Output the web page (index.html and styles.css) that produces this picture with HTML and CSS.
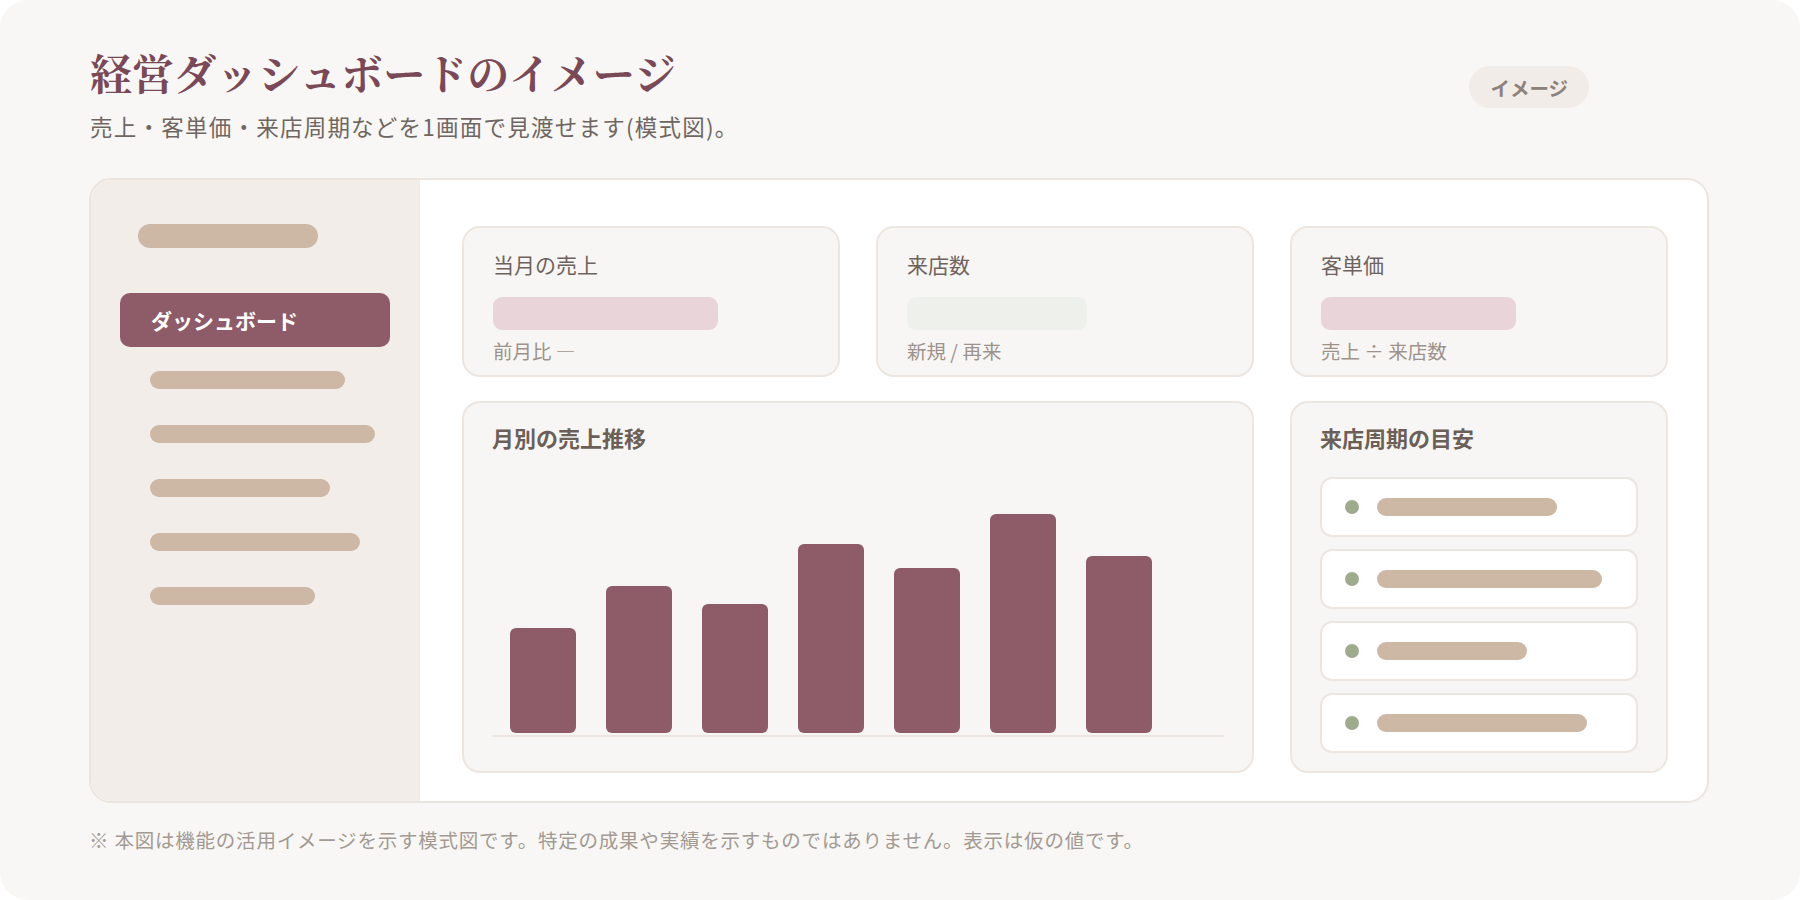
FILE: index.html
```html
<!DOCTYPE html>
<html lang="ja">
<head>
<meta charset="utf-8">
<title>経営ダッシュボードのイメージ</title>
<link rel="stylesheet" href="styles.css">
</head>
<body>
<div class="page">
  <header class="page-header">
    <div class="heading">
      <h1 class="title">経営ダッシュボードのイメージ</h1>
      <p class="lead">売上・客単価・来店周期などを1画面で見渡せます(模式図)。</p>
    </div>
    <span class="badge">イメージ</span>
  </header>

  <section class="mock">
    <aside class="sidebar">
      <div class="logo-line"></div>
      <div class="nav-active">ダッシュボード</div>
      <div class="nav-line w195"></div>
      <div class="nav-line w225"></div>
      <div class="nav-line w180"></div>
      <div class="nav-line w210"></div>
      <div class="nav-line w165"></div>
    </aside>

    <main class="board">
      <div class="kpi">
        <div class="kpi-label">当月の売上</div>
        <div class="kpi-value pink w225"></div>
        <div class="kpi-note">前月比 —</div>
      </div>
      <div class="kpi">
        <div class="kpi-label">来店数</div>
        <div class="kpi-value green w180"></div>
        <div class="kpi-note">新規 / 再来</div>
      </div>
      <div class="kpi">
        <div class="kpi-label">客単価</div>
        <div class="kpi-value pink w195"></div>
        <div class="kpi-note">売上 ÷ 来店数</div>
      </div>

      <div class="panel chart-panel">
        <div class="panel-title">月別の売上推移</div>
        <div class="chart">
          <div class="bar" style="height:105px"></div>
          <div class="bar" style="height:147px"></div>
          <div class="bar" style="height:129px"></div>
          <div class="bar" style="height:189px"></div>
          <div class="bar" style="height:165px"></div>
          <div class="bar" style="height:219px"></div>
          <div class="bar" style="height:177px"></div>
        </div>
      </div>

      <div class="panel cycle-panel">
        <div class="panel-title">来店周期の目安</div>
        <ul class="cycle-list">
          <li class="cycle-item"><span class="dot"></span><span class="cycle-line w180"></span></li>
          <li class="cycle-item"><span class="dot"></span><span class="cycle-line w225"></span></li>
          <li class="cycle-item"><span class="dot"></span><span class="cycle-line w150"></span></li>
          <li class="cycle-item"><span class="dot"></span><span class="cycle-line w210"></span></li>
        </ul>
      </div>
    </main>
  </section>

  <p class="footnote">※ 本図は機能の活用イメージを示す模式図です。特定の成果や実績を示すものではありません。表示は仮の値です。</p>
</div>
</body>
</html>
```

FILE: styles.css
```css
* {
  box-sizing: border-box;
}

html,
body {
  margin: 0;
  background: #ffffff;
}

body {
  font-family: "Noto Sans CJK JP", "Noto Sans", sans-serif;
  color: #6f6662;
}

.page {
  width: 1800px;
  height: 900px;
  padding: 45px 91px 0 89px;
  background: #f8f7f5;
  border-radius: 28px;
  display: flex;
  flex-direction: column;
}

/* header */
.page-header {
  display: flex;
  justify-content: space-between;
  align-items: flex-start;
  padding-left: 1px;
}

.title {
  margin: 0;
  font-family: "Noto Serif CJK JP", "Noto Serif JP", serif;
  font-size: 42px;
  line-height: 1.3;
  font-weight: 700;
  color: #7a4958;
}

.lead {
  margin: 10px 0 0;
  font-size: 22.5px;
  line-height: 1.5;
  letter-spacing: 0.055em;
  color: #6f6662;
}

.badge {
  margin: 21px 120px 0 0;
  height: 42px;
  padding: 0 21px;
  border-radius: 21px;
  background: #f1ece8;
  color: #8c827b;
  font-size: 19.5px;
  font-weight: 700;
  display: flex;
  align-items: center;
}

/* mock window */
.mock {
  margin-top: 35px;
  height: 625px;
  flex: none;
  display: flex;
  border: 2px solid #ece5df;
  border-radius: 22px;
  overflow: hidden;
  background: #ffffff;
}

.sidebar {
  width: 329px;
  flex: none;
  background: #f2ede9;
  padding: 44px 30px 0 29px;
  display: flex;
  flex-direction: column;
  align-items: flex-start;
}

.logo-line {
  width: 180px;
  height: 24px;
  margin-left: 18px;
  border-radius: 12px;
  background: #cdb8a5;
}

.nav-active {
  margin-top: 45px;
  width: 270px;
  height: 54px;
  padding-left: 31px;
  border-radius: 10px;
  background: #8e5b68;
  color: #ffffff;
  font-size: 21px;
  font-weight: 700;
  display: flex;
  align-items: center;
}

.nav-line {
  height: 18px;
  margin: 36px 0 0 30px;
  border-radius: 9px;
  background: #cdb8a5;
}

.nav-active + .nav-line {
  margin-top: 24px;
}

.w150 { width: 150px; }
.w165 { width: 165px; }
.w180 { width: 180px; }
.w195 { width: 195px; }
.w210 { width: 210px; }
.w225 { width: 225px; }

/* dashboard body */
.board {
  flex: 1;
  padding: 46px 40px 0 42px;
  display: grid;
  grid-template-columns: repeat(3, 378px);
  grid-template-rows: 151px 372px;
  column-gap: 36px;
  row-gap: 24px;
  align-content: start;
}

.kpi,
.panel {
  background: #f8f6f4;
  border: 2px solid #ede6e0;
  border-radius: 18px;
}

.kpi {
  padding: 21px 28px 0 29px;
  display: flex;
  flex-direction: column;
  align-items: flex-start;
}

.kpi-label {
  font-size: 21px;
  line-height: 1.5;
  color: #6e635e;
}

.kpi-value {
  margin-top: 16px;
  height: 33px;
  border-radius: 9px;
}

.kpi-value.pink {
  background: #e9d4d9;
}

.kpi-value.green {
  background: #eef1eb;
}

.kpi-note {
  margin-top: 6px;
  font-size: 19.5px;
  line-height: 1.5;
  color: #9d938c;
}

.panel {
  padding: 18px 28px 34px;
  display: flex;
  flex-direction: column;
}

.chart-panel {
  grid-column: span 2;
}

.panel-title {
  font-size: 22px;
  line-height: 1.5;
  font-weight: 700;
  color: #6b5f58;
}

.chart {
  flex: 1;
  display: flex;
  align-items: flex-end;
  gap: 30px;
  padding: 0 0 2px 18px;
  border-bottom: 2px solid #ece5e0;
}

.bar {
  width: 66px;
  border-radius: 6px;
  background: #8e5b68;
}

.cycle-list {
  list-style: none;
  margin: 23px 0 0;
  padding: 0;
  display: flex;
  flex-direction: column;
  gap: 12px;
}

.cycle-item {
  height: 60px;
  padding-left: 23px;
  background: #ffffff;
  border: 2px solid #ede6e0;
  border-radius: 12px;
  display: flex;
  align-items: center;
  gap: 18px;
}

.dot {
  width: 14px;
  height: 14px;
  border-radius: 50%;
  background: #9daa8b;
}

.cycle-line {
  height: 18px;
  border-radius: 9px;
  background: #cdb8a5;
}

.footnote {
  margin: 22px 0 0;
  font-size: 19.5px;
  line-height: 1.5;
  letter-spacing: 0.04em;
  color: #a39a93;
}
```
